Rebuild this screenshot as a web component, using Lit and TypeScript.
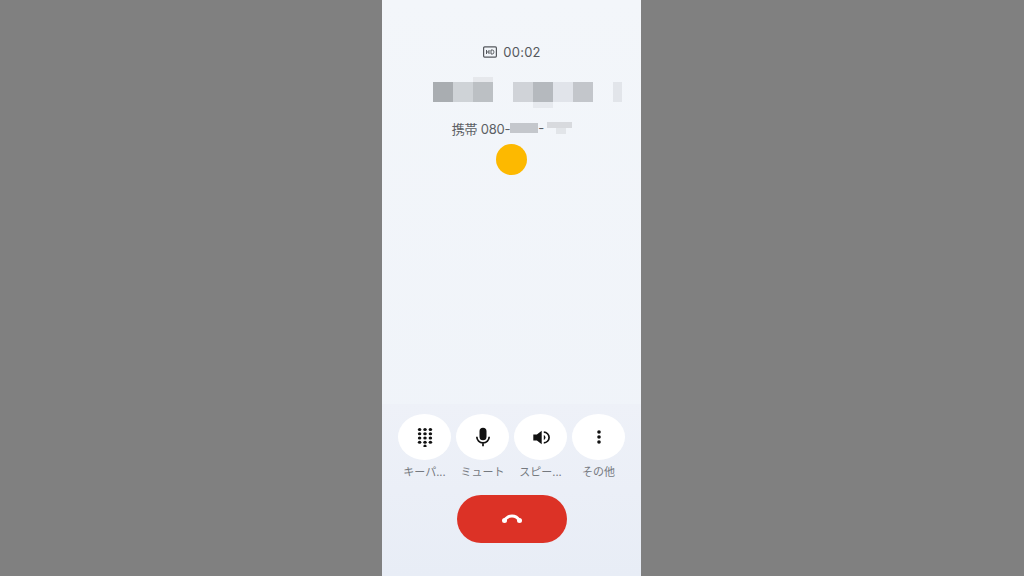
import { LitElement, html, css, svg } from "lit";
import { customElement } from "lit/decorators.js";

const cells = [
  { c: "#a9adb1" }, { c: "#cfd3d7" }, { c: "#bcc0c4", up: true }, { gap: true },
  { c: "#d0d3d8" }, { c: "#b5b9be", down: true }, { c: "#e1e4ea" }, { c: "#c3c6cb" }, { gap: true },
];

const dotsKeypad = () => {
  const out = [];
  for (let r = 0; r < 4; r++) for (let c = 0; c < 3; c++) {
    out.push(svg`<ellipse cx=${4.6 + c * 5.4} cy=${2.5 + r * 4.25} rx="1.75" ry="1.5"></ellipse>`);
  }
  out.push(svg`<circle cx="10" cy="19.1" r="1.6"></circle>`);
  return out;
};

const icons = {
  keypad: svg`<g fill="#111">${dotsKeypad()}</g>`,
  mic: svg`<path fill="#111" d="M10 .8A3.500 3.500 0 0 0 6.500 4.300v5.400a3.500 3.500 0 0 0 7 0V4.300A3.500 3.500 0 0 0 10 .8z"/><path fill="none" stroke="#111" stroke-width="1.700" d="M3.800 9.700a6.200 6.200 0 0 0 12.400 0M10 15.900v3.400"/>`,
  speaker: svg`<path fill="#111" d="M2.300 7.600h3.600L10.700 3.800v13.400L5.900 13.400H2.300z"/><path fill="none" stroke="#111" stroke-width="1.700" d="M12.800 5.200a5.300 5.300 0 0 1 0 10.600"/><path fill="#111" d="M12.800 8a2.700 2.700 0 0 1 0 5z"/>`,
  more: svg`<g fill="#111"><circle cx="10" cy="5" r="1.800"/><circle cx="10" cy="10" r="1.800"/><circle cx="10" cy="15" r="1.800"/></g>`,
};

const actions = [
  { icon: icons.keypad, label: "キーパ..." },
  { icon: icons.mic, label: "ミュート" },
  { icon: icons.speaker, label: "スピー..." },
  { icon: icons.more, label: "その他" },
];

@customElement("app-root")
export class AppRoot extends LitElement {
  static styles = css`
    :host {
      display: flex;
      justify-content: flex-start;
      padding-left: 382px;
      box-sizing: border-box;
      width: 1024px;
      height: 576px;
      background: #808080;
      font-family: "Inter", "Noto Sans CJK JP", "Noto Sans", sans-serif;
      overflow: hidden;
    }
    .phone {
      width: 259px;
      height: 576px;
      display: flex;
      flex-direction: column;
      background: linear-gradient(#f3f6fa, #eff3f9);
    }
    .info {
      flex: 1;
      display: flex;
      flex-direction: column;
      align-items: center;
      padding-top: 44px;
    }
    .timer {
      display: flex;
      align-items: center;
      gap: 6px;
      height: 16px;
      font-size: 13px;
      color: #55585d;
      letter-spacing: 0.25px;
      margin-left: 1px;
    }
    .hd { display: block; }
    .name {
      display: flex;
      align-items: stretch;
      height: 20px;
      margin-top: 22px;
      margin-left: 31px;
    }
    .cell { width: 20px; position: relative; }
    .cell.up::before, .cell.down::after {
      content: "";
      position: absolute;
      left: 0;
      right: 0;
    }
    .cell.up::before { top: -5px; height: 5px; background: #e6e8ec; }
    .cell.down::after { bottom: -6px; height: 6px; background: #e6e9ee; }
    .end-cell { width: 9px; background: #e2e5ea; }
    .sub {
      display: flex;
      align-items: center;
      height: 16px;
      margin-top: 18px;
      font-size: 13px;
      color: #5c5f64;
      margin-left: 1px;
    }
    .sub-text { letter-spacing: -0.25px; }
    .redact { position: relative; height: 10px; }
    .redact.a { width: 28px; background: #c4c7cc; }
    .redact.b { width: 25px; height: 6px; margin: -6px 0 0 3px; background: #d8dade; }
    .redact.b::after {
      content: "";
      position: absolute;
      left: 9px;
      top: 6px;
      width: 10px;
      height: 6px;
      background: #e2e5e9;
    }
    .dot {
      width: 31px;
      height: 31px;
      border-radius: 50%;
      background: #fdb900;
      margin-top: 8px;
    }
    .panel {
      height: 172px;
      box-sizing: border-box;
      padding-top: 10px;
      display: flex;
      flex-direction: column;
      align-items: center;
      background: linear-gradient(#eef1f8, #e8edf6);
    }
    .actions { display: flex; gap: 5px; }
    .action {
      width: 53px;
      display: flex;
      flex-direction: column;
      align-items: center;
    }
    .round {
      width: 53px;
      height: 46px;
      border-radius: 50%;
      background: #fff;
      display: flex;
      align-items: center;
      justify-content: center;
    }
    .round svg { width: 20px; height: 20px; display: block; margin-bottom: 1px; }
    .label {
      margin-top: 4px;
      height: 16px;
      line-height: 16px;
      font-size: 11px;
      color: #75797f;
      white-space: nowrap;
    }
    .end {
      margin-top: 15px;
      width: 110px;
      height: 48px;
      border-radius: 24px;
      background: #dc3226;
      display: flex;
      align-items: center;
      justify-content: center;
    }
    .end svg { display: block; width: 22px; height: 12px; }
  `;

  render() {
    return html`
      <div class="phone">
        <div class="info">
          <div class="timer">
            <svg class="hd" width="14" height="12" viewBox="0 0 14 12">
              <rect x="0.6" y="0.9" width="12.8" height="10.2" rx="1" fill="none" stroke="#55585d" stroke-width="1.2"></rect>
              <path d="M3.500 4v4M6 4v4M3.500 6H6M8 4v4h1.300a1.500 1.500 0 0 0 1.500-1.500v-1A1.500 1.500 0 0 0 9.300 4z" fill="none" stroke="#55585d" stroke-width="1"></path>
            </svg>
            <span>00:02</span>
          </div>
          <div class="name">
            ${cells.map((k) => html`<div
              class="cell ${k.up ? "up" : ""} ${k.down ? "down" : ""}"
              style=${k.c ? `background:${k.c}` : ""}
            ></div>`)}
            <div class="end-cell"></div>
          </div>
          <div class="sub">
            <span class="sub-text">携帯 080-</span><span class="redact a"></span><span>-</span><span class="redact b"></span>
          </div>
          <div class="dot"></div>
        </div>
        <div class="panel">
          <div class="actions">
            ${actions.map((a) => html`
              <div class="action">
                <div class="round"><svg viewBox="0 0 20 20">${a.icon}</svg></div>
                <div class="label">${a.label}</div>
              </div>`)}
          </div>
          <div class="end">
            <svg viewBox="0 0 22 12">
              <path fill="none" stroke="#fff" stroke-width="2.800" d="M3.500 7.500C5.500 4 8 3 11 3S16.500 4 18.500 7.500"></path>
              <circle cx="3.500" cy="7.500" r="2.500" fill="#fff"></circle>
              <circle cx="18.500" cy="7.500" r="2.500" fill="#fff"></circle>
            </svg>
          </div>
        </div>
      </div>
    `;
  }
}
